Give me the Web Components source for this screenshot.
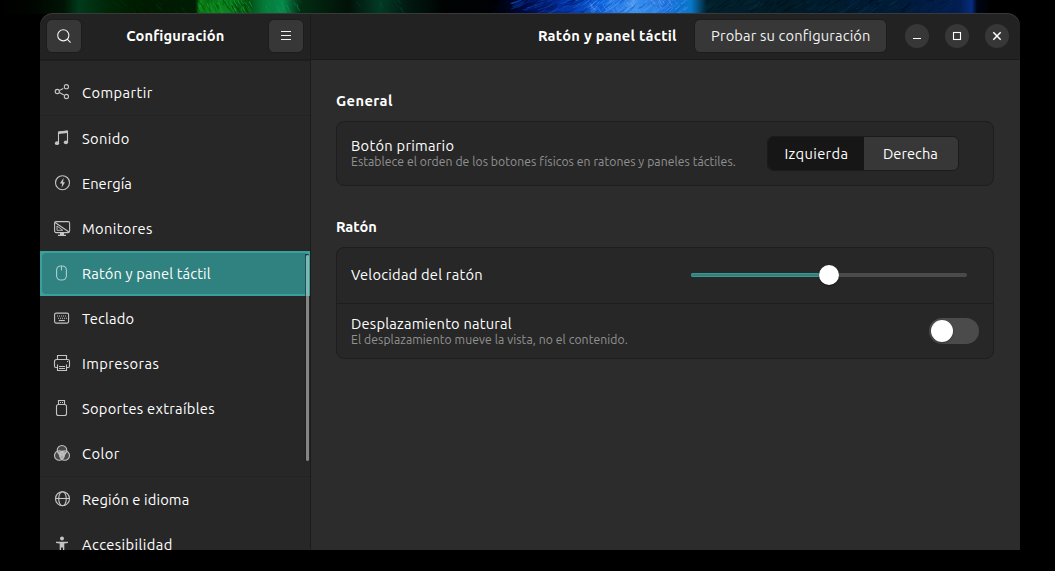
<!DOCTYPE html>
<html lang="es">
<head>
<meta charset="utf-8">
<title>Configuración</title>
<style>
html,body{margin:0;height:100%;background:#000;overflow:hidden}
body{font-family:Ubuntu,"Noto Sans",sans-serif;font-size:14.667px;color:#fff}
</style>
</head>
<body>
<desktop-screen></desktop-screen>
<script>
const define = (name, html, setup) => {
  const t = document.createElement('template');
  t.innerHTML = '<style>*{box-sizing:border-box}</style>' + html;
  customElements.define(name, class extends HTMLElement {
    connectedCallback() {
      if (this.shadowRoot) return;
      this.attachShadow({mode: 'open'}).append(t.content.cloneNode(true));
      if (setup) setup(this, this.shadowRoot);
    }
  });
};

const icons = {
  search: '<circle cx="7.3" cy="7.3" r="5.6"/><path d="M11.2 11.2l3.4 3.4"/>',
  menu: '<path d="M3 3.5h10M3 7.5h10M3 11.5h10"/>',
  share: '<circle cx="12.4" cy="2.7" r="2.1"/><circle cx="3.3" cy="7.5" r="2.1"/><circle cx="12.4" cy="12.5" r="2.1"/><path d="M5.3 6.5l4-2M5.3 8.5l4.6 2.6"/>',
  music: '<path d="M4.5 13V2.2L13.5 1.2V12.2"/><path d="M4.5 2.7l9-1" stroke-width="2.6"/><g fill="currentColor" stroke="none"><ellipse cx="3" cy="13.2" rx="2.1" ry="1.9"/><ellipse cx="11.9" cy="12.3" rx="2.1" ry="1.9"/></g>',
  power: '<circle cx="8.5" cy="7.7" r="7"/><path d="M9.6 2.8L5.9 8.4h2.2l-.5 4.4 3.4-5.5H9.1z" fill="currentColor" stroke="none"/>',
  monitor: '<rect x=".6" y="1.6" width="15" height="11" rx="1.5"/><path d="M1 2.5l14 9.5"/><path d="M3 6v4.3h5.8z" stroke-width=".9"/><path d="M6 13h4v1.8h2v1.3H4v-1.3h2z" fill="currentColor" stroke="none"/>',
  mouse: '<rect x="2.6" y="1" width="9.8" height="14" rx="4.2"/><path d="M7.5 1v4.5"/>',
  keyboard: '<rect x=".6" y="3.1" width="14" height="10" rx="1.5"/><path d="M3 6h10M4 8.2h9" stroke-dasharray="1 1"/><path d="M4.8 10.5h6"/>',
  printer: '<path d="M3.5 4.5v-4h9v4M3 12.5H1.8Q.5 12.5.5 11V6.6Q.5 4.5 2.5 4.5h11q2 0 2 2V11q0 1.5-1.3 1.5H13M3.5 9.5v6h9v-6M5 11.5h6M5 13.5h6"/><path d="M13 6.5h1"/>',
  usb: '<rect x="2.5" y="4.5" width="10" height="11" rx="2"/><path d="M4.5 4.5v-4h6v4M6 2.5h1M8 2.5h1"/>',
  color: '<path d="M8 5.5l4 1.6-1.3 4.6L8 14.2l-2.7-2.5L4 7.1z" fill="currentColor" stroke="none" opacity=".75"/><g fill="currentColor" fill-opacity=".22"><circle cx="8" cy="5.3" r="4.8"/><circle cx="5.3" cy="10.5" r="4.8"/><circle cx="10.7" cy="10.5" r="4.8"/></g>',
  globe: '<circle cx="8.5" cy="7.7" r="7"/><ellipse cx="8.5" cy="7.7" rx="3.8" ry="7"/><path d="M1.5 7.5h14"/>',
  access: '<g fill="currentColor" stroke="none"><circle cx="8" cy="2.5" r="2"/><path d="M2 5.7h12v1.2l-3.7.6V16H9v-4.5H7V16H5.7V7.5L2 6.9z"/></g>',
  min: '<path d="M4 10.5h8" stroke-width="1.1"/>',
  max: '<rect x="4.5" y="4.5" width="7" height="7" stroke-width="1.1"/>',
  close: '<path d="M4.3 4.3l7.4 7.4M11.7 4.3l-7.4 7.4" stroke-width="1.5"/>'
};

define('ui-icon', '<style>:host{display:block;width:16px;height:16px;flex:none}svg{display:block;overflow:visible}</style><svg width="16" height="16" viewBox="0 0 16 16" fill="none" stroke="currentColor" stroke-width="1.1"></svg>',
  (h, r) => { r.querySelector('svg').innerHTML = icons[h.getAttribute('name')]; });

/* Single-line label; tracking is adapted when the natural width differs from the given one. */
define('ui-text', `<style>:host{display:block;white-space:nowrap;line-height:20px;flex:none}
:host([bold]){font-weight:700}:host([small]){font-size:12.2px;line-height:16px;color:#929292}
span{display:inline-block;font-feature-settings:"liga" 1}</style><span><slot></slot></span>`, (h, r) => {
  const s = r.querySelector('span'), w = +h.getAttribute('w');
  const n = h.textContent.length;
  h.style.width = w + 'px';
  const natural = s.getBoundingClientRect().width;
  if (Math.abs(natural - w - .8) > 1.2) s.style.letterSpacing = ((w + .8 - natural) / n) + 'px';
});

define('wall-paper', `<style>:host{display:block;height:14px;width:1055px}svg{display:block}</style>
<svg width="1055" height="14"><defs>
<linearGradient id="g"><stop offset="0" stop-color="#000"/><stop offset=".03" stop-color="#000500"/><stop offset=".06" stop-color="#001404"/><stop offset=".075" stop-color="#003a1c"/><stop offset=".1" stop-color="#002708"/><stop offset=".13" stop-color="#001a00"/><stop offset=".185" stop-color="#001c04"/><stop offset=".19" stop-color="#087512"/><stop offset=".215" stop-color="#0a8222"/><stop offset=".235" stop-color="#044c12"/><stop offset=".25" stop-color="#047a38"/><stop offset=".268" stop-color="#068a4a"/><stop offset=".285" stop-color="#022c12"/><stop offset=".33" stop-color="#011108"/><stop offset=".36" stop-color="#023a25"/><stop offset=".385" stop-color="#011a12"/><stop offset=".42" stop-color="#000302"/><stop offset=".47" stop-color="#000105"/><stop offset=".5" stop-color="#000a46"/><stop offset=".54" stop-color="#0434a8"/><stop offset=".57" stop-color="#0c62dc"/><stop offset=".6" stop-color="#3c92ee"/><stop offset=".63" stop-color="#1c72e0"/><stop offset=".655" stop-color="#0878c8"/><stop offset=".67" stop-color="#02202c"/><stop offset=".75" stop-color="#011a26"/><stop offset=".85" stop-color="#011a36"/><stop offset=".91" stop-color="#021e52"/><stop offset=".921" stop-color="#052c80"/><stop offset=".926" stop-color="#010614"/><stop offset=".94" stop-color="#000"/><stop offset="1" stop-color="#000"/></linearGradient></defs>
<rect width="1055" height="14" fill="url(#g)"/><g id="s" fill="none"></g></svg>`, (h, r) => {
  let seed = 7; const rnd = () => (seed = (seed * 16807) % 2147483647) / 2147483647;
  const bands = [[80,190,30,'#013a10',9],[197,250,70,'#1cb82c',5],[199,252,60,'#013a05',5],[262,300,14,'#13a85c',4],[355,402,14,'#06583a',6],[520,610,60,'#0b55d8',-20],[500,590,30,'#000b3c',-20],[580,690,80,'#59adf8',-11],[590,680,40,'#8ba4e8',6],[580,690,30,'#0436b4',-11],[705,900,45,'#054150',-14],[800,970,30,'#04305c',-10],[700,960,50,'#00060c',-12]];
  let out = '';
  for (const [a, b, n, c, dx] of bands) for (let i = 0; i < n; i++) {
    const x = a + rnd() * (b - a), y = rnd() * 14 - 5, k = .3 + rnd() * .6;
    out += `<path d="M${x} ${y}q${dx * .2} 4 ${dx * k} ${9 * k}" stroke="${c}" stroke-width="${.4 + rnd() * .5}" opacity="${.25 + rnd() * .45}"/>`;
  }
  r.querySelector('#s').innerHTML = out;
});

define('header-button', `<style>:host{display:flex;align-items:center;justify-content:center;height:34px;min-width:36px;background:#373737;border:1px solid #1c1c1c;border-radius:6px;flex:none;color:#f2f2f2}
:host([round]){width:24px;min-width:24px;height:24px;border:0;border-radius:50%;color:#fff}</style><slot></slot>`);

define('nav-item', `<style>:host{display:flex;align-items:center;height:45px;padding-left:14px;gap:12px;flex:none}
ui-icon{color:#c4c4c4;position:relative;top:-1px}
:host([group]){height:46px;border-top:1px solid #232323}
:host([active]){background:#38a19d;position:relative}
:host([active])::after{content:"";position:absolute;inset:2px;border-radius:4px;background:#308280}
:host([active]) ui-icon,:host([active]) ui-text{position:relative;z-index:1}
:host([active]) ui-icon{color:#acd0cf}</style>`, (h, r) => {
  const icon = document.createElement('ui-icon'); icon.setAttribute('name', h.getAttribute('icon'));
  const label = document.createElement('ui-text');
  label.textContent = h.getAttribute('label'); label.setAttribute('w', h.getAttribute('w'));
  r.append(icon, label);
});

define('side-bar', `<style>:host{display:flex;flex-direction:column;background:#272727;border-right:1px solid #1b1b1b;overflow:hidden;min-height:0;position:relative}
header{height:48px;flex:none;background:#222;border-bottom:2px solid #1d1d1d;display:flex;align-items:flex-start;justify-content:space-between;padding:6px 6px 0}
header ui-text{margin-top:7px}
nav{display:flex;flex-direction:column;padding-top:9px;flex:1;min-height:0;overflow:hidden}
.bar{position:absolute;left:265px;top:241px;width:4px;height:208px;border:1px solid #202020;border-right:0;border-radius:3px;background:#858585;z-index:2}
.bar i{display:block;height:41px;background:#82b5b3;border-radius:2px 2px 0 0;box-shadow:-1px 0 #1c5453}
</style><header><header-button><ui-icon name="search"></ui-icon></header-button><ui-text bold w="97.5">Configuración</ui-text><header-button><ui-icon name="menu"></ui-icon></header-button></header>
<nav><nav-item icon="share" label="Compartir" w="70"></nav-item><nav-item group icon="music" label="Sonido" w="47"></nav-item><nav-item icon="power" label="Energía" w="50"></nav-item><nav-item icon="monitor" label="Monitores" w="70"></nav-item><nav-item active icon="mouse" label="Ratón y panel táctil" w="128"></nav-item><nav-item icon="keyboard" label="Teclado" w="51.5"></nav-item><nav-item icon="printer" label="Impresoras" w="76.5"></nav-item><nav-item icon="usb" label="Soportes extraíbles" w="132"></nav-item><nav-item icon="color" label="Color" w="37"></nav-item><nav-item group icon="globe" label="Región e idioma" w="106.5"></nav-item><nav-item icon="access" label="Accesibilidad" w="90"></nav-item></nav><div class="bar"><i></i></div>`);

define('settings-card', `<style>:host{display:block;background:#272727;border:1px solid #1e1e1e;border-radius:8px}</style><slot></slot>`);
define('settings-row', `<style>:host{display:flex;align-items:center;justify-content:space-between;padding:0 14px;height:55px}
:host([tall]){height:63px}:host([divided]){height:55px;border-top:1px solid #1e1e1e}.t{display:flex;flex-direction:column;padding-bottom:2px}
::slotted(ui-text[small]){margin-top:-2px;margin-bottom:-1px}</style><div class="t"><slot></slot></div><slot name="control"></slot>`);
define('segmented-control', `<style>:host{display:flex;width:192px;height:35px;margin-right:20px;border:1px solid #1b1b1b;border-radius:6px;overflow:hidden;background:#373737}
div{display:flex;align-items:center;justify-content:center}.on{width:96px;background:#161616}.off{flex:1;padding-right:1px}</style><div class="on"><ui-text w="63">Izquierda</ui-text></div><div class="off"><ui-text w="55">Derecha</ui-text></div>`);
define('range-slider', `<style>:host{display:flex;align-items:center;width:276px;height:20px;margin:0 12px 2px 0}
i{height:4px;width:128px;background:#4a4a4a;border-radius:0 2px 2px 0}i.f{background:#308280;border:1px solid #3b9693;border-right:0;border-radius:2px 0 0 2px}
b{width:20px;height:20px;border-radius:50%;background:#fff;flex:none;box-shadow:0 1px 2px #0006}</style><i class="f"></i><b></b><i></i>`);
define('toggle-switch', `<style>:host{display:flex;align-items:center;width:50px;height:26px;border-radius:13px;background:#4b4b4b;padding:0 2px}b{width:22px;height:22px;border-radius:50%;background:#fff;box-shadow:0 1px 2px #0005}</style><b></b>`);

define('settings-panel', `<style>:host{display:flex;flex-direction:column;background:#2c2c2c;min-width:0}
header{height:47px;flex:none;background:#222;border-bottom:1px solid #1a1a1a;display:flex;align-items:flex-start;justify-content:flex-end;padding:6px 11px 0 0}
header>ui-text{margin:7px 18px 0 0}.w{display:flex;gap:16px;margin:5px 0 0 18px}
main{padding:31px 26px 0 25px}settings-card{margin-top:10px;margin-bottom:31px}
header-button.test{width:193px}</style>
<header><ui-text bold w="138">Ratón y panel táctil</ui-text><header-button class="test"><ui-text w="159">Probar su configuración</ui-text></header-button><div class="w"><header-button round><ui-icon name="min"></ui-icon></header-button><header-button round><ui-icon name="max"></ui-icon></header-button><header-button round><ui-icon name="close"></ui-icon></header-button></div></header>
<main><ui-text bold w="56">General</ui-text>
<settings-card><settings-row tall><ui-text w="102.5">Botón primario</ui-text><ui-text small w="384">Establece el orden de los botones físicos en ratones y paneles táctiles.</ui-text><segmented-control slot="control"></segmented-control></settings-row></settings-card>
<ui-text bold w="41">Ratón</ui-text>
<settings-card><settings-row><ui-text w="131">Velocidad del ratón</ui-text><range-slider slot="control"></range-slider></settings-row>
<settings-row divided><ui-text w="160">Desplazamiento natural</ui-text><ui-text small w="276">El desplazamiento mueve la vista, no el contenido.</ui-text><toggle-switch slot="control"></toggle-switch></settings-row></settings-card></main>`);

define('app-window', `<style>:host{display:grid;grid-template-columns:271px 709px;grid-template-rows:537px;width:980px;height:537px;border-radius:13px 13px 0 0;overflow:hidden;position:relative}
:host::after{content:"";position:absolute;inset:0;border-radius:13px 13px 0 0;box-shadow:inset 0 1px 0 #393939;pointer-events:none}</style><side-bar></side-bar><settings-panel></settings-panel>`);
define('desktop-screen', `<style>:host{display:block;width:1055px;height:571px;background:#000;overflow:hidden}app-window{margin:-1px 0 0 40px}</style><wall-paper></wall-paper><app-window></app-window>`);
</script>
</body>
</html>
